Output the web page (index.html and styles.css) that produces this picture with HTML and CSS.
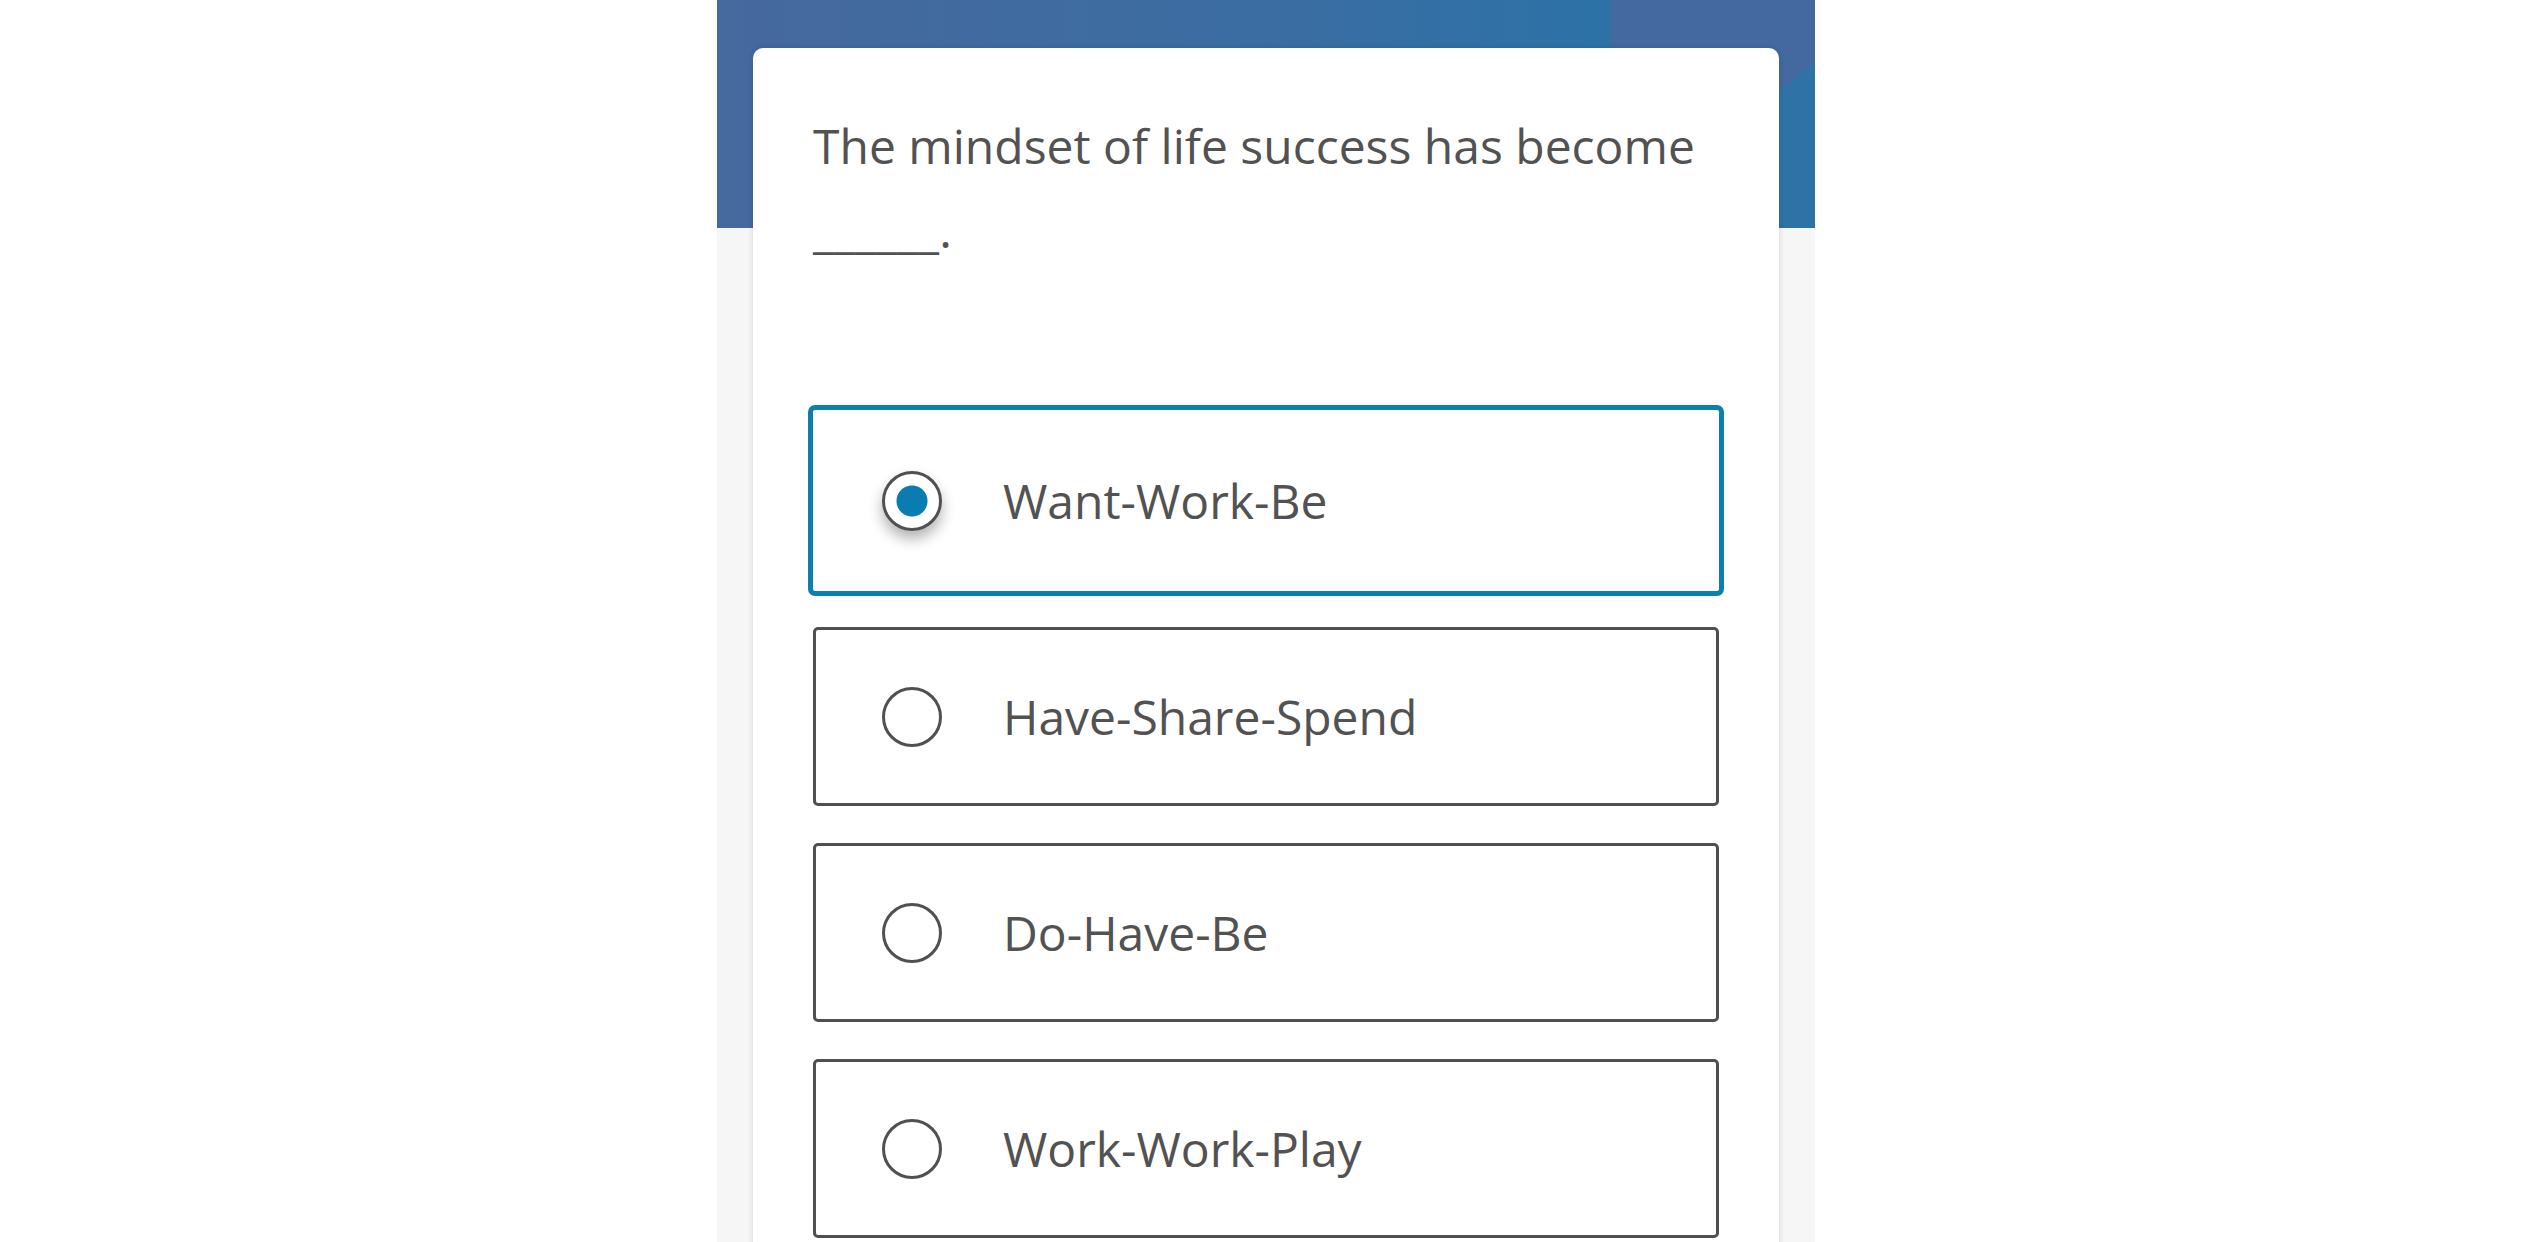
FILE: index.html
```html
<!DOCTYPE html>
<html>
  <head>
    <meta charset="utf-8">
    <title>Quiz</title>
    <link rel="stylesheet" href="styles.css">
  </head>
  <body>
    <div id="page">
      <div id="card">
        <p id="question">The mindset of life success has become ______.</p>
        <form id="answers">
          <label class="answer selected">
            <input type="radio" name="answer" class="radio" checked>
            <span>Want-Work-Be</span>
          </label>
          <label class="answer">
            <input type="radio" name="answer" class="radio">
            <span>Have-Share-Spend</span>
          </label>
          <label class="answer">
            <input type="radio" name="answer" class="radio">
            <span>Do-Have-Be</span>
          </label>
          <label class="answer">
            <input type="radio" name="answer" class="radio">
            <span>Work-Work-Play</span>
          </label>
        </form>
      </div>
    </div>
  </body>
</html>
```

FILE: styles.css
```css
html, body {
  margin: 0;
  height: 100%;
  overflow: hidden;
  background: #fff;
}

body {
  font-family: "Open Sans", "Noto Sans", sans-serif;
  color: #525252;
}

#page {
  width: 1098px;
  min-height: 100%;
  margin: 0 auto;
  display: flex;
  flex-direction: column;
  background:
    linear-gradient(322deg, transparent 42.7%, #4469a0 42.7%) right top / 205px 228px no-repeat,
    linear-gradient(90deg, #46699e 0%, #3b6da2 50%, #2c72a7 81%, #2e72a6 100%) left top / 100% 228px no-repeat,
    #f6f6f6;
}

#card {
  margin: 48px 36px 0;
  padding: 56px 60px 0;
  min-height: 1300px;
  background: #fff;
  border-radius: 10px 10px 0 0;
  box-shadow: 0 0 6px rgba(0, 0, 0, 0.14);
}

#question {
  margin: 0;
  font-size: 48px;
  line-height: 84px;
}

#answers {
  margin-top: 139px;
  display: flex;
  flex-direction: column;
  gap: 37px;
}

.answer {
  box-sizing: border-box;
  height: 179px;
  display: flex;
  align-items: center;
  gap: 61px;
  padding-left: 66px;
  border: 3px solid #505050;
  border-radius: 5px;
  font-size: 48px;
}

.answer.selected {
  height: 191px;
  margin: -6px -5px;
  padding-left: 69px;
  border: 5px solid #0b80ae;
  border-radius: 7px;
}

.radio {
  appearance: none;
  -webkit-appearance: none;
  box-sizing: border-box;
  flex-shrink: 0;
  width: 60px;
  height: 60px;
  margin: 0;
  border: 3px solid #505050;
  border-radius: 50%;
  background: #fff;
}

.radio:checked {
  background: radial-gradient(circle, #0a7db0 0 15px, #fff 16px);
  box-shadow: 0 8px 14px rgba(0, 0, 0, 0.3);
}
```
